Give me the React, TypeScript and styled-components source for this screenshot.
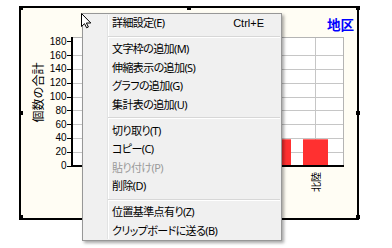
import React from 'react';
import styled, { createGlobalStyle } from 'styled-components';

const GlobalStyle = createGlobalStyle`
  html, body {
    margin: 0;
    padding: 0;
    background: #ffffff;
  }
  body {
    font-family: "Noto Sans", "Noto Sans CJK JP", sans-serif;
  }
`;

// chart geometry (svg coords, origin at the plot svg's top-left)
const AXIS_X = 51;
const PLOT_RIGHT = 323;
const PLOT_TOP = 1;
const BASE_Y = 129.5;
const PX_PER_UNIT = 13.8 / 20;
const TICKS = [0, 20, 40, 60, 80, 100, 120, 140, 160, 180];

const bars = [
  { x: 245, value: 38 },
  { x: 282, value: 38 },
];

const menuItems: Array<
  { type: 'item'; label: string; shortcut?: string; disabled?: boolean } | { type: 'sep' }
> = [
  { type: 'item', label: '詳細設定(E)', shortcut: 'Ctrl+E' },
  { type: 'sep' },
  { type: 'item', label: '文字枠の追加(M)' },
  { type: 'item', label: '伸縮表示の追加(S)' },
  { type: 'item', label: 'グラフの追加(G)' },
  { type: 'item', label: '集計表の追加(U)' },
  { type: 'sep' },
  { type: 'item', label: '切り取り(T)' },
  { type: 'item', label: 'コピー(C)' },
  { type: 'item', label: '貼り付け(P)', disabled: true },
  { type: 'item', label: '削除(D)' },
  { type: 'sep' },
  { type: 'item', label: '位置基準点有り(Z)' },
  { type: 'item', label: 'クリップボードに送る(B)' },
];

const Page = styled.div`
  position: relative;
  width: 392px;
  height: 248px;
  box-sizing: border-box;
  padding: 6px 0 0 19px;
  overflow: hidden;
`;

const ChartFrame = styled.div`
  position: relative;
  width: 340px;
  height: 214px;
  box-sizing: border-box;
  border: 2px solid #000;
  background: #fffdf4;
  display: flex;
  flex-direction: column;
`;

const Handle = styled.span<{ $h: 'left' | 'center' | 'right'; $v: 'top' | 'middle' | 'bottom' }>`
  position: absolute;
  width: 4px;
  height: 4px;
  background: #000;
  ${(p) => (p.$h === 'left' ? 'left: -2px;' : p.$h === 'right' ? 'right: -3px;' : 'left: calc(50% - 2px);')}
  ${(p) => (p.$v === 'top' ? 'top: -2px;' : p.$v === 'bottom' ? 'bottom: -1px;' : 'top: calc(50% - 2px);')}
`;

const TitleRow = styled.div`
  height: 28px;
  display: flex;
  justify-content: flex-end;
  align-items: flex-start;
  padding: 8px 3px 0 0;
  box-sizing: border-box;
`;

const Title = styled.span`
  color: #0000ff;
  font-family: "Noto Sans CJK JP", sans-serif;
  font-size: 13.5px;
  font-weight: bold;
  line-height: 16px;
`;

const ChartSvg = styled.svg`
  display: block;
  flex: none;
  font-family: "Liberation Sans", "Noto Sans CJK JP", sans-serif;
`;

const Menu = styled.div`
  position: absolute;
  left: 82px;
  top: 13px;
  width: 200px;
  box-sizing: border-box;
  border: 1px solid #979797;
  background: #f0f0f0;
  box-shadow: 2px 2px 3px rgba(0, 0, 0, 0.35);

  &::before {
    content: '';
    position: absolute;
    left: 24px;
    top: 1px;
    bottom: 1px;
    width: 1px;
    background: #e2e3e3;
    box-shadow: 1px 0 0 #ffffff;
  }
`;

const MenuItem = styled.div<{ $disabled?: boolean }>`
  position: relative;
  display: flex;
  align-items: center;
  height: 18.5px;
  padding: 0 17px 0 29px;
  font-size: 11px;
  color: ${(p) => (p.$disabled ? '#9a9a9a' : '#000000')};
  white-space: nowrap;
`;

const ItemLabel = styled.span`
  font-family: "Noto Sans", "Noto Sans CJK JP", sans-serif;
  font-feature-settings: "palt";
  letter-spacing: -0.6px;
  line-height: 18px;
`;

const Shortcut = styled.span`
  margin-left: auto;
  font-family: "Liberation Sans", sans-serif;
  line-height: 18px;
`;

const Separator = styled.div`
  position: relative;
  height: 7.5px;
  display: flex;
  align-items: center;
  padding: 0 1px 0 25px;

  &::after {
    content: '';
    flex: 1;
    height: 1px;
    background: #d7d7d7;
    box-shadow: 0 1px 0 #ffffff;
  }
`;

const Cursor = styled.svg`
  position: absolute;
  left: 81px;
  top: 13px;
`;

const yOf = (v: number) => BASE_Y - v * PX_PER_UNIT;
const crisp = (y: number) => Math.round(y) + 0.5;

function Chart() {
  return (
    <ChartSvg width={336} height={182} viewBox="0 0 336 182">
      <rect x={AXIS_X} y={PLOT_TOP} width={PLOT_RIGHT - AXIS_X} height={BASE_Y - PLOT_TOP} fill="#ffffff" />
      {TICKS.filter((v) => v > 0 && v < 180).map((v) => (
        <line key={v} x1={AXIS_X} x2={PLOT_RIGHT} y1={crisp(yOf(v))} y2={crisp(yOf(v))} stroke="#c6c6c6" />
      ))}
      <line x1={294.5} x2={294.5} y1={PLOT_TOP} y2={BASE_Y} stroke="#c6c6c6" />
      <line x1={AXIS_X} x2={PLOT_RIGHT} y1={PLOT_TOP + 0.5} y2={PLOT_TOP + 0.5} stroke="#b4b4b4" />
      <line x1={PLOT_RIGHT - 0.5} x2={PLOT_RIGHT - 0.5} y1={PLOT_TOP} y2={BASE_Y} stroke="#b4b4b4" />
      {bars.map((b) => (
        <rect key={b.x} x={b.x} y={yOf(b.value)} width={25} height={BASE_Y - yOf(b.value)} fill="#ff3030" />
      ))}
      <line x1={AXIS_X} x2={AXIS_X} y1={PLOT_TOP} y2={BASE_Y + 1.5} stroke="#000" strokeWidth={2} />
      <line x1={AXIS_X - 1} x2={PLOT_RIGHT} y1={BASE_Y + 0.5} y2={BASE_Y + 0.5} stroke="#000" strokeWidth={2} />
      {TICKS.map((v) => (
        <g key={v}>
          <line x1={46} x2={AXIS_X} y1={crisp(yOf(v))} y2={crisp(yOf(v))} stroke="#000" />
          <text x={45.5} y={yOf(v) + 3.5} fontSize={10} textAnchor="end" fill="#000">
            {v}
          </text>
        </g>
      ))}
      <text
        x={16}
        y={56.5}
        fontSize={12}
        textAnchor="middle"
        dominantBaseline="central"
        transform="rotate(-90 16 56.5)"
        fontFamily='"Noto Sans CJK JP", sans-serif'
        fill="#000"
      >
        個数の合計
      </text>
      <text
        x={294.5}
        y={136}
        fontSize={10}
        textAnchor="end"
        dominantBaseline="central"
        transform="rotate(-90 294.5 136)"
        fontFamily='"Noto Sans CJK JP", sans-serif'
        fill="#000"
      >
        北陸
      </text>
    </ChartSvg>
  );
}

export default function App() {
  return (
    <>
      <GlobalStyle />
      <Page>
        <ChartFrame>
          <Handle $h="left" $v="top" />
          <Handle $h="center" $v="top" />
          <Handle $h="right" $v="top" />
          <Handle $h="left" $v="middle" />
          <Handle $h="right" $v="middle" />
          <Handle $h="left" $v="bottom" />
          <Handle $h="center" $v="bottom" />
          <Handle $h="right" $v="bottom" />
          <TitleRow>
            <Title>地区</Title>
          </TitleRow>
          <Chart />
        </ChartFrame>
        <Menu>
          {menuItems.map((m, i) =>
            m.type === 'sep' ? (
              <Separator key={i} />
            ) : (
              <MenuItem key={i} $disabled={m.disabled}>
                <ItemLabel>{m.label}</ItemLabel>
                {m.shortcut && <Shortcut>{m.shortcut}</Shortcut>}
              </MenuItem>
            )
          )}
        </Menu>
        <Cursor width={12} height={16} viewBox="0 0 12 16">
          <path
            d="M0.5 0.5 V13.5 L3.5 10.7 L5.6 14.8 L7.4 14 L5.4 10 H9.8 Z"
            fill="#ffffff"
            stroke="#000000"
            strokeWidth={1}
            strokeLinejoin="miter"
          />
        </Cursor>
      </Page>
    </>
  );
}
